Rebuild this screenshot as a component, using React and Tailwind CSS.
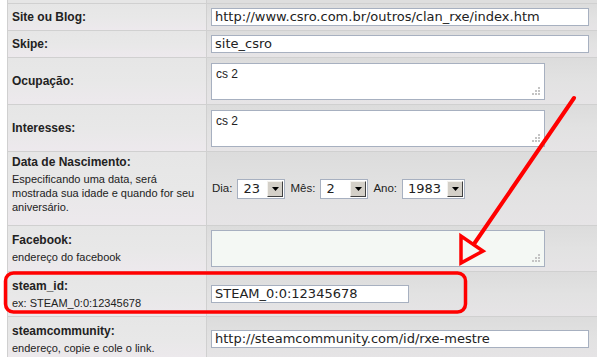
import React from 'react';

const Grip = () => (
  <svg className="absolute right-[3px] bottom-[3px]" width="10" height="10" viewBox="0 0 10 10">
    <rect x="7" y="1" width="2" height="2" fill="#c4c4c4" />
    <rect x="4" y="4" width="2" height="2" fill="#c4c4c4" />
    <rect x="7" y="4" width="2" height="2" fill="#c4c4c4" />
    <rect x="1" y="7" width="2" height="2" fill="#c4c4c4" />
    <rect x="4" y="7" width="2" height="2" fill="#c4c4c4" />
    <rect x="7" y="7" width="2" height="2" fill="#c4c4c4" />
  </svg>
);

const TextBox = ({ value, width }) => (
  <div className={`h-[18px] ${width} border border-[#a7b0c0] bg-white px-[3px] font-['DejaVu_Sans',Verdana,sans-serif] text-[13px] leading-[16px] text-[#222] whitespace-nowrap overflow-hidden`}>
    {value}
  </div>
);

const TextArea = ({ value, tint }) => (
  <div className={`relative h-[37px] w-[334px] border border-[#a7b0c0] ${tint ? 'bg-[#f4f8f4]' : 'bg-white'} px-[4px] pt-[3px] text-[12px] leading-[14px] text-[#222]`}>
    {value}
    <Grip />
  </div>
);

const Select = ({ value, width }) => (
  <div className={`flex h-[20px] ${width} items-center border border-[#a7b0c0] bg-white pl-[5px] pr-[1px]`}>
    <span className="flex-1 font-['DejaVu_Sans',Verdana,sans-serif] text-[13px] leading-[16px] text-[#222]">{value}</span>
    <span className="flex h-[16px] w-[16px] items-center justify-center border border-t-[#f4f2ee] border-l-[#f4f2ee] border-r-[#404040] border-b-[#404040] bg-[#d4d0c8]">
      <svg width="7" height="4" viewBox="0 0 7 4"><path d="M0 0h7L3.5 4z" fill="#000" /></svg>
    </span>
  </div>
);

const Row = ({ h, label, desc, children, tall }) => (
  <div className={`flex ${h} border-b border-[#d0d0d0]`}>
    <div className={`flex w-[199px] flex-col justify-center border-r border-[#d0d0d0] bg-gradient-to-b from-[#e6e6e6] via-[#e8e8e8] to-[#ede9ed] pl-[4px] ${tall ? 'pb-[9px]' : ''}`}>
      <div className="text-[12px] font-bold leading-[14px] text-[#222]">{label}</div>
      {desc && <div className="mt-[3px] text-[11px] leading-[14px] text-[#222]">{desc}</div>}
    </div>
    <div className="flex flex-1 items-center bg-gradient-to-b from-[#dcdcdc] via-[#e2e2e2] to-[#e6e4e6] pl-[4px]">
      {children}
    </div>
  </div>
);

export default function App() {
  return (
    <div className="relative h-[357px] w-[597px] overflow-hidden bg-white pl-[7px] font-['Liberation_Sans',Tahoma,sans-serif]">
      <div className="border-l border-[#d0d0d0]">
        <div className="flex h-[4px] border-b border-[#d0d0d0]">
          <div className="w-[199px] border-r border-[#d0d0d0] bg-[#e6e6e6]" />
          <div className="flex-1 bg-[#dedede]" />
        </div>
        <Row h="h-[27px]" label="Site ou Blog:">
          <TextBox value="http://www.csro.com.br/outros/clan_rxe/index.htm" width="w-[378px]" />
        </Row>
        <Row h="h-[27px]" label="Skipe:">
          <TextBox value="site_csro" width="w-[378px]" />
        </Row>
        <Row h="h-[47px]" label="Ocupação:">
          <TextArea value="cs 2" />
        </Row>
        <Row h="h-[47px]" label="Interesses:">
          <TextArea value="cs 2" />
        </Row>
        <Row
          h="h-[74px]"
          tall
          label="Data de Nascimento:"
          desc={<>Especificando uma data, será<br />mostrada sua idade e quando for seu<br />aniversário.</>}
        >
          <div className="flex items-center gap-[5px] text-[11.5px] text-[#222]">
            <span className="ml-[1px]">Dia:</span>
            <Select value="23" width="w-[48px]" />
            <span>Mês:</span>
            <Select value="2" width="w-[48px]" />
            <span>Ano:</span>
            <Select value="1983" width="w-[63px]" />
          </div>
        </Row>
        <Row h="h-[46px]" label="Facebook:" desc="endereço do facebook">
          <TextArea value="" tint />
        </Row>
        <Row h="h-[45px]" label="steam_id:" desc="ex: STEAM_0:0:12345678">
          <TextBox value="STEAM_0:0:12345678" width="w-[198px]" />
        </Row>
        <Row h="h-[45px]" label="steamcommunity:" desc="endereço, copie e cole o link.">
          <TextBox value="http://steamcommunity.com/id/rxe-mestre" width="w-[378px]" />
        </Row>
      </div>

      <svg className="pointer-events-none absolute left-0 top-0" width="597" height="357" viewBox="0 0 597 357">
        <rect x="5.5" y="273" width="460" height="39" rx="8" fill="none" stroke="#ff0000" strokeWidth="3.5" />
        <path d="M574 98 L474 244" stroke="#ff0000" strokeWidth="4" fill="none" strokeLinecap="round" />
        <path d="M461 236 L461 263 L483 251 Z" stroke="#ff0000" strokeWidth="3.5" fill="none" strokeLinejoin="miter" />
      </svg>
    </div>
  );
}
